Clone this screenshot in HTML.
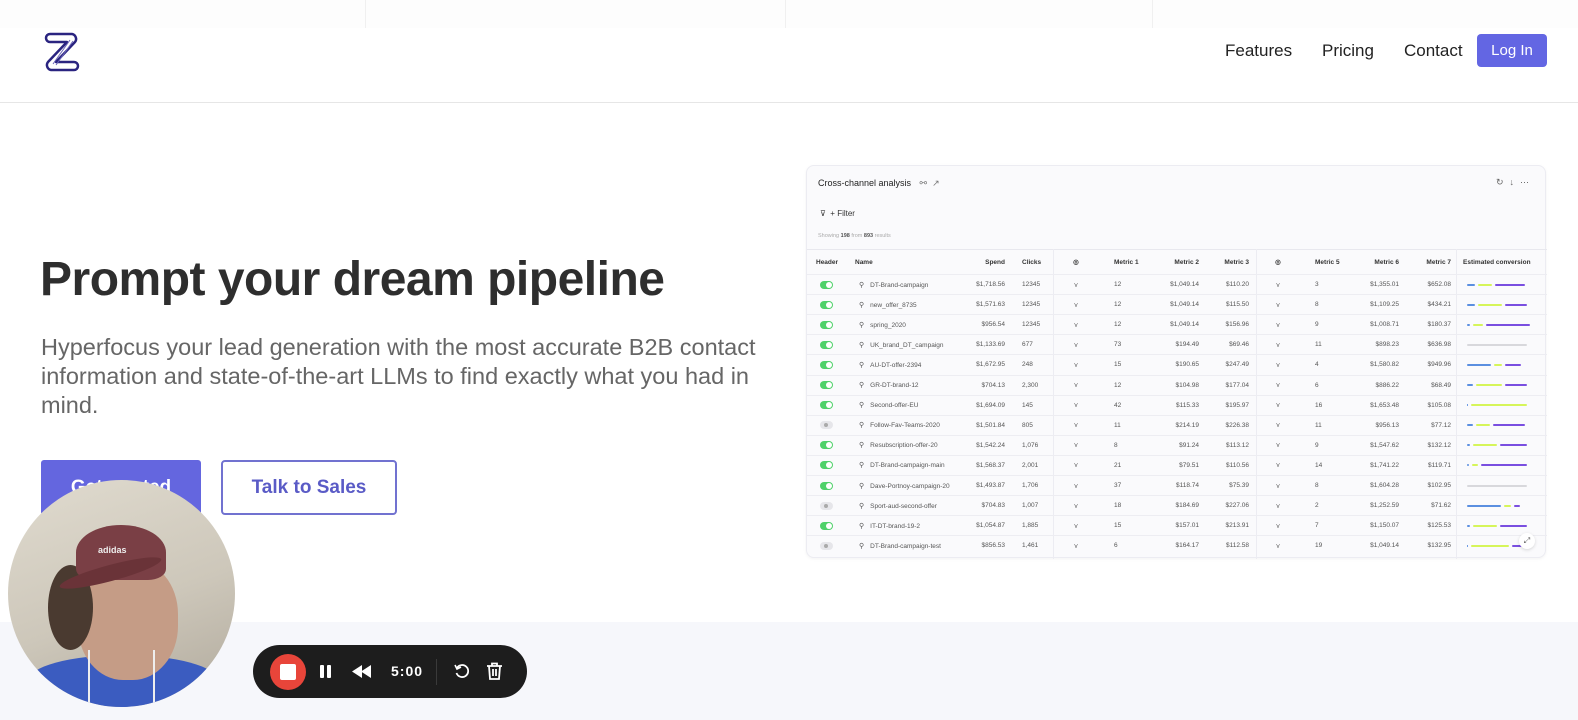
<!DOCTYPE html>
<html><head><meta charset="utf-8"><style>
*{box-sizing:border-box;margin:0;padding:0}
html{width:1578px;height:720px;overflow:hidden}
body{width:1578px;height:720px;overflow:hidden;background:#fff;font-family:"Liberation Sans",sans-serif;position:relative}
.abs{position:absolute}
.nav a{position:absolute;top:41px;font-size:17px;color:#222;text-decoration:none}
.card{left:806px;top:165px;width:740px;height:393px;background:#fafafc;border:1px solid #ececf2;border-radius:8px;box-shadow:0 1px 3px rgba(0,0,0,.05);font-size:6.5px;color:#555}
.row{position:absolute;left:0;width:740px;height:20px;display:grid;grid-template-columns:44px 110px 44px 48px 46px 52px 48px 50px 58px 54px 38px 52px 96px;align-items:center;border-top:1px solid #ededf2}
.row>div{white-space:nowrap;overflow:hidden}
.r{text-align:right}.c{text-align:center}
.tg{width:13px;height:8px;border-radius:4px;background:#4fd16a;margin-left:13px;position:relative}
.tg::after{content:"";position:absolute;right:1px;top:1px;width:6px;height:6px;border-radius:50%;background:#fff}
.tg.off{background:#e6e6ea}.tg.off::after{left:1px;right:auto;background:#aaa;width:4px;height:4px;top:2px;left:4px}
.nm{padding-left:8px}.nm::before{content:"⚲";color:#555;margin-right:6px;font-size:7px}
.pl{padding-left:15px}
.bars{padding-left:16px;display:flex;gap:3px;align-items:center}
.bars i{display:block;height:2px;border-radius:1px}
.b{background:#5b8fe0}.l{background:#d6f55a}.p{background:#7a4fe0}.g{background:#d8d8dc}
.vl{position:absolute;top:83px;width:1px;height:310px;background:#ececf2}
</style></head><body>
<div class="abs" style="left:0;top:0;width:1578px;height:28px;background:#fdfdfd"></div>
<div class="abs" style="left:365px;top:0;width:1px;height:28px;background:#f0f0f0"></div>
<div class="abs" style="left:785px;top:0;width:1px;height:28px;background:#f0f0f0"></div>
<div class="abs" style="left:1152px;top:0;width:1px;height:28px;background:#f0f0f0"></div>
<svg class="abs" style="left:44px;top:30px" width="36" height="42" viewBox="0 0 36 42"><path d="M6 4 H28 a5 5 0 0 1 3 8 L12 32 H30 a4 4 0 0 1 0 8 H7 a5 5 0 0 1 -3 -8 L23 12 H6 a4 4 0 0 1 0 -8 Z" fill="none" stroke="#2a2480" stroke-width="2.5" stroke-linejoin="round"/><path d="M26 10 L9 34 M29 11 L12 35" stroke="#6a64b8" stroke-width="1"/></svg>
<div class="nav"><a style="left:1225px">Features</a><a style="left:1322px">Pricing</a><a style="left:1404px">Contact</a></div>
<div class="abs" style="left:1477px;top:34px;width:70px;height:33px;background:#6366e3;border-radius:4px;color:#fff;font-size:15px;text-align:center;line-height:33px">Log In</div>
<div class="abs" style="left:0;top:102px;width:1578px;height:1px;background:#e6e6e6"></div>
<div class="abs" style="left:0;top:622px;width:1578px;height:98px;background:#f6f7fb"></div>
<div class="abs" style="left:40px;top:252px;font-size:48px;font-weight:bold;color:#2e2e2e;letter-spacing:-0.5px">Prompt your dream pipeline</div>
<div class="abs" style="left:41px;top:333px;width:740px;font-size:23.5px;line-height:29px;color:#666">Hyperfocus your lead generation with the most accurate B2B contact information and state-of-the-art LLMs to find exactly what you had in mind.</div>
<div class="abs" style="left:41px;top:460px;width:160px;height:55px;background:#6466df;border-radius:3px;color:#fff;font-size:19px;font-weight:bold;text-align:center;line-height:55px">Get started</div>
<div class="abs" style="left:221px;top:460px;width:176px;height:55px;border:2px solid #7172d0;border-radius:4px;color:#5a5bc6;font-size:19px;font-weight:bold;text-align:center;line-height:51px">Talk to Sales</div>

<div class="abs card">
<div class="abs" style="left:11px;top:12px;font-size:9px;color:#222">Cross-channel analysis <span style="color:#777;margin-left:6px">⚯ &nbsp;↗</span></div>
<div class="abs" style="right:10px;top:11px;font-size:9px;color:#666;letter-spacing:6px">↻↓⋯</div>
<div class="abs" style="left:13px;top:43px;font-size:8px;color:#333">⊽ &nbsp;+ Filter</div>
<div class="abs" style="left:11px;top:67px;font-size:5.5px;color:#aaa">Showing <b style="color:#555">198</b> from <b style="color:#555">893</b> results</div>
<div class="row" style="top:83px;height:25px;border-top:1px solid #e8e8ee;font-weight:bold;color:#333"><div style="padding-left:9px">Header</div><div style="padding-left:4px">Name</div><div class="r">Spend</div><div style="padding-left:17px">Clicks</div><div class="c">◎</div><div class="pl">Metric 1</div><div class="r">Metric 2</div><div class="r">Metric 3</div><div class="c">◎</div><div style="padding-left:8px">Metric 5</div><div class="r">Metric 6</div><div class="r">Metric 7</div><div style="padding-left:12px">Estimated conversion</div></div>
<div class="vl" style="left:246px"></div><div class="vl" style="left:449px"></div><div class="vl" style="left:649px"></div>
<div id="rows"></div>
<div class="abs" style="right:10px;bottom:8px;width:16px;height:16px;border-radius:50%;background:#fff;box-shadow:0 1px 3px rgba(0,0,0,.15);font-size:8px;text-align:center;line-height:16px;color:#555">⤢</div>
</div>

<div class="abs" style="left:8px;top:480px;width:227px;height:227px;border-radius:50%;overflow:hidden;background:linear-gradient(160deg,#e0dbcf,#cdc7ba 55%,#b0a99c)">
<div class="abs" style="left:20px;top:175px;width:190px;height:52px;border-radius:50% 50% 0 0;background:#3b5cc0"></div>
<div class="abs" style="left:70px;top:80px;width:100px;height:120px;border-radius:45%;background:#c59c86"></div>
<div class="abs" style="left:40px;top:85px;width:45px;height:85px;border-radius:50%;background:#4a3a30"></div>
<div class="abs" style="left:68px;top:45px;width:90px;height:55px;border-radius:50% 50% 20% 20%;background:#7a3f45"></div>
<div class="abs" style="left:50px;top:85px;width:105px;height:16px;border-radius:50%;background:#6a3338;transform:rotate(-15deg)"></div>
<div class="abs" style="left:90px;top:65px;font-size:9px;color:#eee;font-weight:bold">adidas</div>
<div class="abs" style="left:80px;top:170px;width:2px;height:57px;background:#eee"></div>
<div class="abs" style="left:145px;top:170px;width:2px;height:57px;background:#eee"></div>
</div>
<div class="abs" style="left:253px;top:645px;width:274px;height:53px;background:#1d1d1d;border-radius:27px">
<div class="abs" style="left:17px;top:9px;width:36px;height:36px;border-radius:50%;background:#e8453a"></div>
<div class="abs" style="left:27px;top:19px;width:16px;height:16px;border-radius:2px;background:#fff"></div>
<div class="abs" style="left:67px;top:20px;width:4px;height:13px;background:#fff;border-radius:1px"></div>
<div class="abs" style="left:74px;top:20px;width:4px;height:13px;background:#fff;border-radius:1px"></div>
<svg class="abs" style="left:99px;top:20px" width="20" height="13"><path d="M10 0 L0 6.5 10 13Z M19 0 L9 6.5 19 13Z" fill="#fff"/></svg>
<div class="abs" style="left:138px;top:18px;color:#fff;font-size:14px;letter-spacing:1px;font-weight:bold">5:00</div>
<div class="abs" style="left:183px;top:14px;width:1px;height:26px;background:#3a3a3a"></div>
<svg class="abs" style="left:201px;top:18px" width="16" height="16" viewBox="0 0 16 16"><path d="M3 5 A6 6 0 1 1 2.5 10" fill="none" stroke="#fff" stroke-width="1.8"/><path d="M1 2 L3 6 L7 4" fill="none" stroke="#fff" stroke-width="1.6"/></svg>
<svg class="abs" style="left:233px;top:17px" width="17" height="18" viewBox="0 0 17 18"><path d="M1 4 H16 M6 4 V1.5 H11 V4 M3 4 L4 17 H13 L14 4 M7 7 V14 M10 7 V14" fill="none" stroke="#fff" stroke-width="1.8"/></svg>
</div>
<script>
var d=[[1,"DT-Brand-campaign","$1,718.56","12345",12,"$1,049.14","$110.20",3,"$1,355.01","$652.08",[8,14,30]],
[1,"new_offer_8735","$1,571.63","12345",12,"$1,049.14","$115.50",8,"$1,109.25","$434.21",[8,24,22]],
[1,"spring_2020","$956.54","12345",12,"$1,049.14","$156.96",9,"$1,008.71","$180.37",[3,10,44]],
[1,"UK_brand_DT_campaign","$1,133.69","677",73,"$194.49","$69.46",11,"$898.23","$636.98",[0,0,0,60]],
[1,"AU-DT-offer-2394","$1,672.95","248",15,"$190.65","$247.49",4,"$1,580.82","$949.96",[24,8,16]],
[1,"GR-DT-brand-12","$704.13","2,300",12,"$104.98","$177.04",6,"$886.22","$68.49",[6,26,22]],
[1,"Second-offer-EU","$1,694.09","145",42,"$115.33","$195.97",16,"$1,653.48","$105.08",[1,56,0]],
[0,"Follow-Fav-Teams-2020","$1,501.84","805",11,"$214.19","$226.38",11,"$956.13","$77.12",[6,14,32]],
[1,"Resubscription-offer-20","$1,542.24","1,076",8,"$91.24","$113.12",9,"$1,547.62","$132.12",[3,24,27]],
[1,"DT-Brand-campaign-main","$1,568.37","2,001",21,"$79.51","$110.56",14,"$1,741.22","$119.71",[2,6,46]],
[1,"Dave-Portnoy-campaign-20","$1,493.87","1,706",37,"$118.74","$75.39",8,"$1,604.28","$102.95",[0,0,0,60]],
[0,"Sport-aud-second-offer","$704.83","1,007",18,"$184.69","$227.06",2,"$1,252.59","$71.62",[34,7,6]],
[1,"IT-DT-brand-19-2","$1,054.87","1,885",15,"$157.01","$213.91",7,"$1,150.07","$125.53",[3,24,27]],
[0,"DT-Brand-campaign-test","$856.53","1,461",6,"$164.17","$112.58",19,"$1,049.14","$132.95",[1,38,10]]];
var h="";d.forEach(function(r,i){var b=r[10],bs="";if(b[3])bs='<i class="g" style="width:60px"></i>';else{if(b[0])bs+='<i class="b" style="width:'+b[0]+'px"></i>';if(b[1])bs+='<i class="l" style="width:'+b[1]+'px"></i>';if(b[2])bs+='<i class="p" style="width:'+b[2]+'px"></i>';}
h+='<div class="row" style="top:'+(108+i*20.1)+'px"><div><div class="tg'+(r[0]?'':' off')+'"></div></div><div class="nm">'+r[1]+'</div><div class="r">'+r[2]+'</div><div style="padding-left:17px">'+r[3]+'</div><div class="c">⋎</div><div class="pl">'+r[4]+'</div><div class="r">'+r[5]+'</div><div class="r">'+r[6]+'</div><div class="c">⋎</div><div style="padding-left:8px">'+r[7]+'</div><div class="r">'+r[8]+'</div><div class="r">'+r[9]+'</div><div class="bars">'+bs+'</div></div>';});
document.getElementById("rows").innerHTML=h;
</script>
</body></html>
